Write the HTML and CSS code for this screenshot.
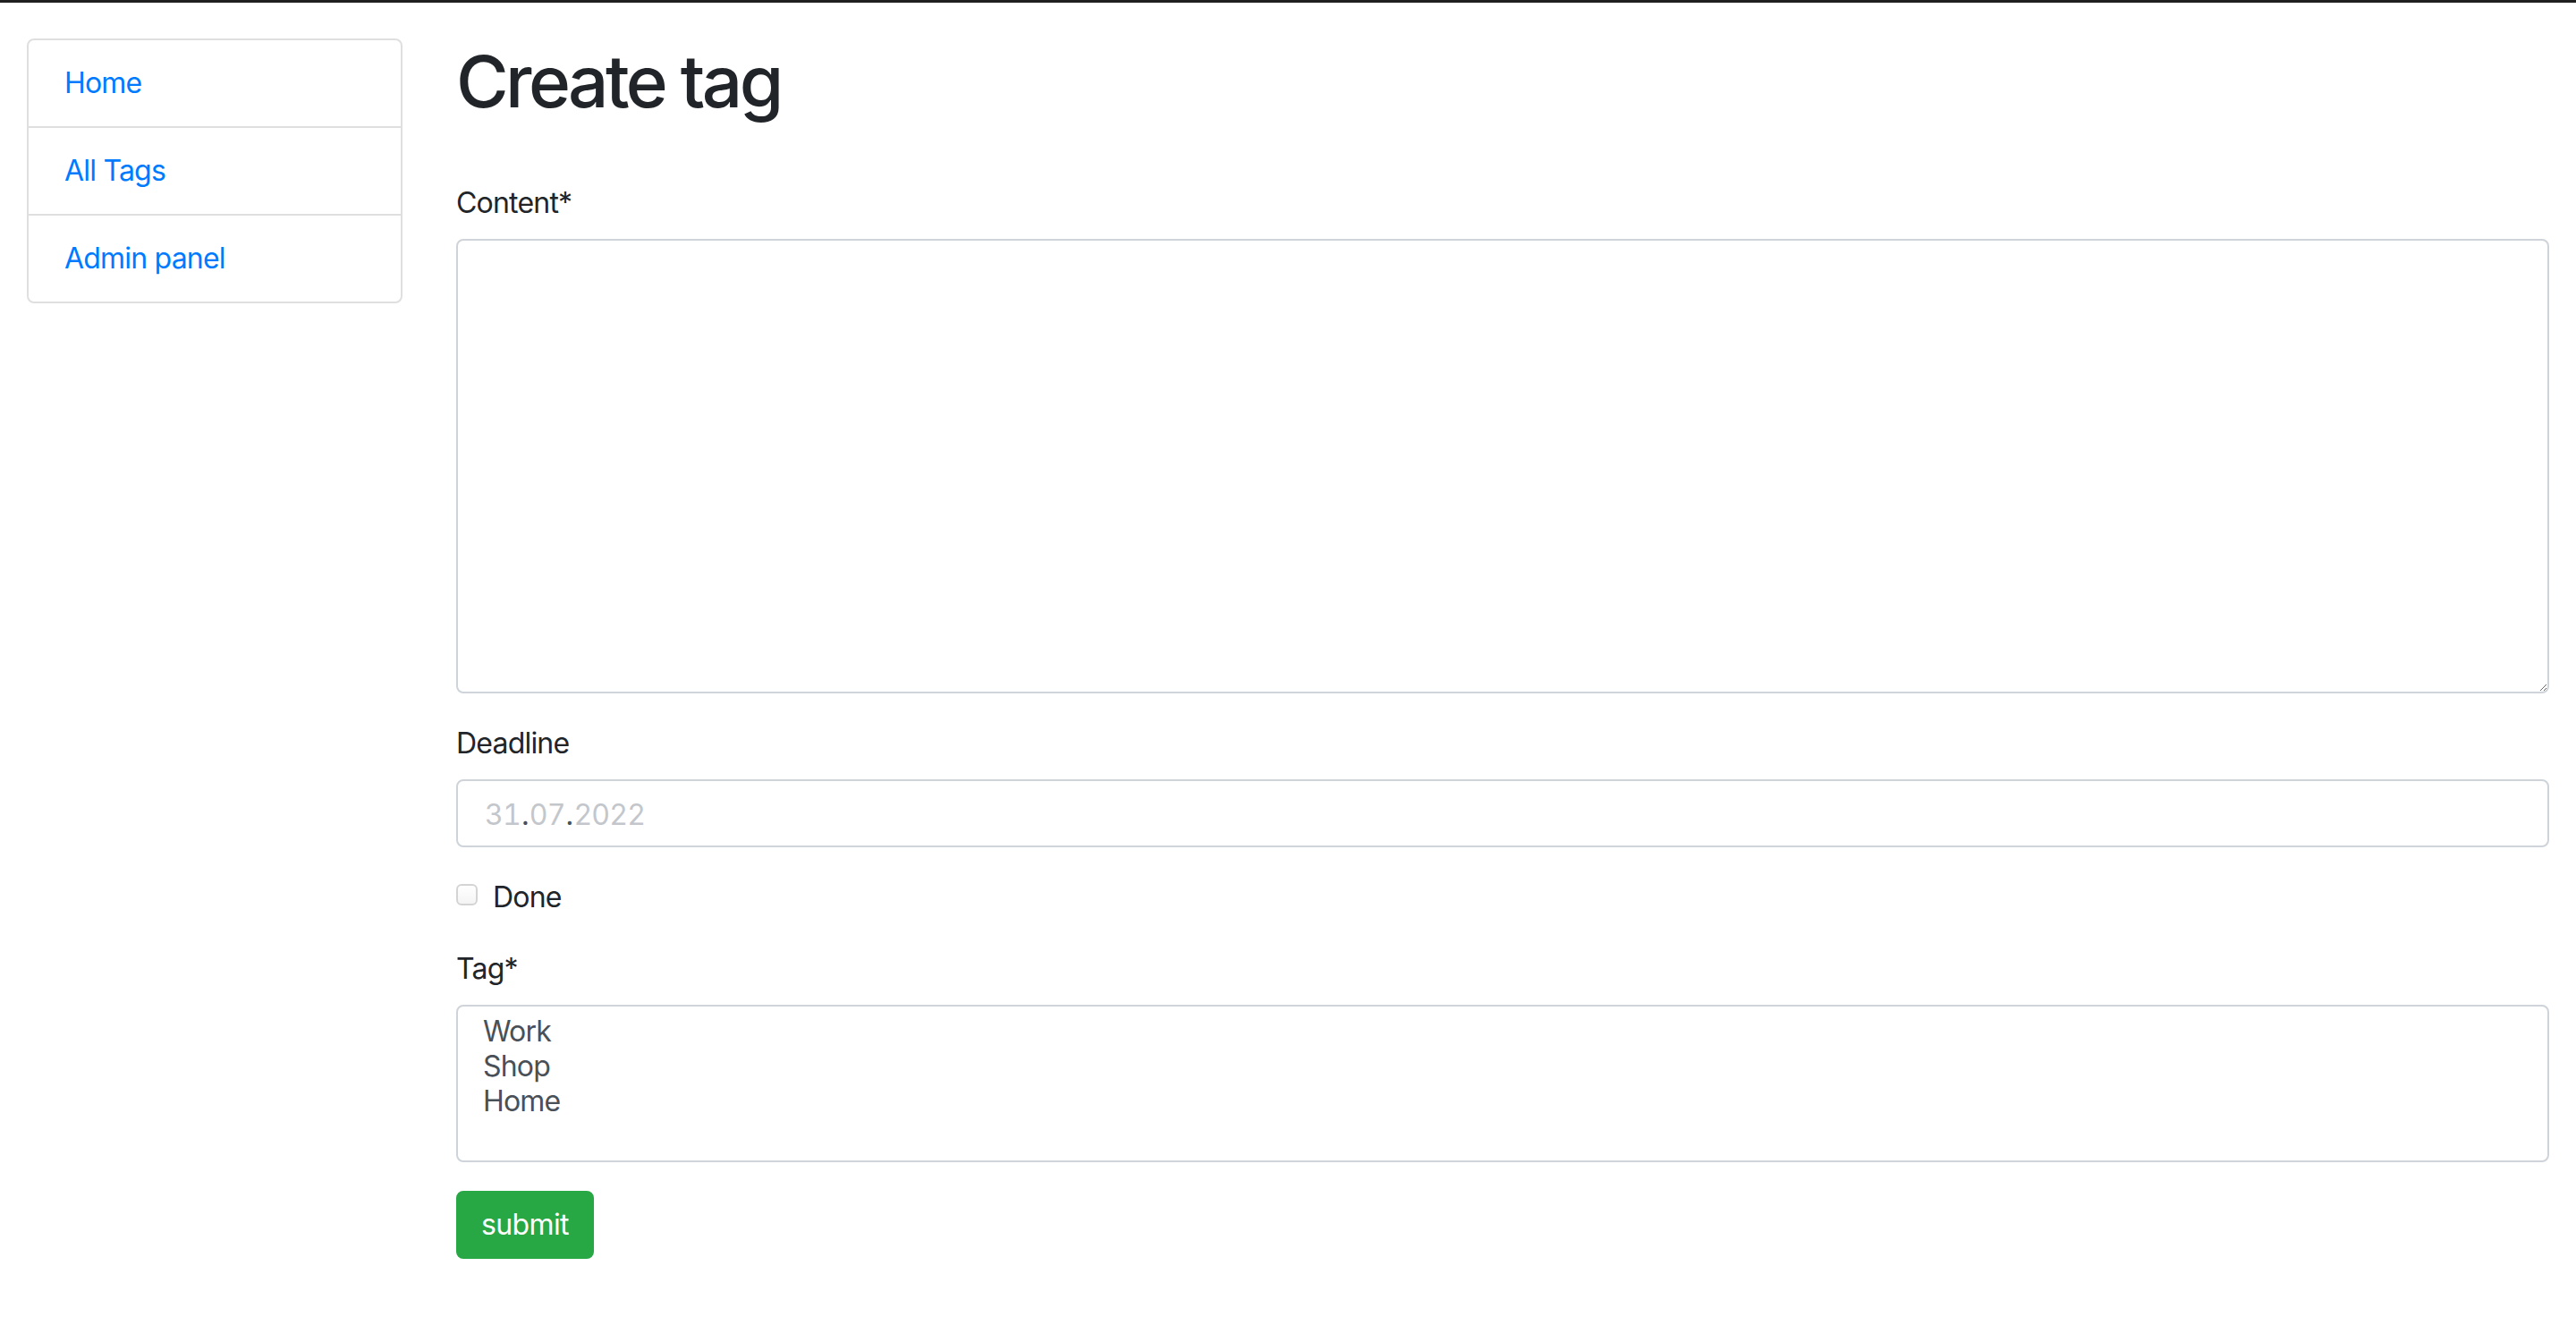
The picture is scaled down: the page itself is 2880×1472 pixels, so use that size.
FILE: index.html
```html
<!DOCTYPE html>
<html lang="en">
<head>
<meta charset="utf-8">
<title>Create tag</title>
<link rel="stylesheet" href="styles.css">
</head>
<body>
<div class="topbar"></div>
<div class="container">
  <div class="row">
    <aside class="col-side">
      <nav class="list-group">
        <a class="list-item" href="#">Home</a>
        <a class="list-item" href="#">All Tags</a>
        <a class="list-item" href="#">Admin panel</a>
      </nav>
    </aside>
    <main class="col-main">
      <h1 class="title">Create tag</h1>
      <form class="form">
        <div class="form-group">
          <label class="label">Content*</label>
          <textarea class="control textarea"></textarea>
        </div>
        <div class="form-group">
          <label class="label">Deadline</label>
          <div class="control date"><span class="dp">31</span><span class="dot">.</span><span class="dp">07</span><span class="dot">.</span><span class="dp">2022</span></div>
        </div>
        <div class="form-group form-check">
          <span class="checkbox"></span>
          <label class="check-label">Done</label>
        </div>
        <div class="form-group">
          <label class="label">Tag*</label>
          <select class="control select" multiple>
            <option>Work</option>
            <option>Shop</option>
            <option>Home</option>
          </select>
        </div>
        <button class="btn" type="button">submit</button>
      </form>
    </main>
  </div>
</div>
</body>
</html>
```
FILE: styles.css
```css
* { box-sizing: border-box; }
html, body {
  margin: 0;
  background: #fff;
}
body {
  font-family: Inter, "Noto Sans", "Liberation Sans", sans-serif;
  font-size: 32px;
  line-height: 48px;
  letter-spacing: -0.025em;
  color: #212529;
}
.topbar {
  height: 3px;
  background: #1f1f1f;
}
.container {
  padding: 40px 30px 0;
}
.row {
  display: flex;
}
.col-side {
  width: 450px;
  flex: 0 0 450px;
  padding: 0 30px 0 0;
}
.col-main {
  flex: 1;
  padding: 0 0 0 30px;
}
.list-group {
  display: flex;
  flex-direction: column;
  border: 2px solid #dfdfdf;
  border-radius: 8px;
}
.list-item {
  display: block;
  padding: 24px 40px;
  color: #007bff;
  text-decoration: none;
  line-height: 48px;
}
.list-item + .list-item {
  border-top: 2px solid #dfdfdf;
}
.title {
  margin: 0 0 64px;
  font-size: 80px;
  line-height: 96px;
  font-weight: 500;
  letter-spacing: -0.045em;
  color: #212529;
}
.form-group {
  margin-bottom: 32px;
}
.label {
  display: inline-block;
  margin-bottom: 16px;
}
.control {
  display: block;
  width: 100%;
  border: 2px solid #ced4da;
  border-radius: 8px;
  padding: 12px 24px;
  font-family: Inter, "Noto Sans", "Liberation Sans", sans-serif;
  font-size: 32px;
  line-height: 48px;
  letter-spacing: -0.025em;
  color: #495057;
  background: #fff;
}
.textarea {
  height: 508px;
  resize: vertical;
}
.date {
  height: 76px;
  padding: 14px 24px 10px 30px;
  font-variant-numeric: tabular-nums;
}
.dp { color: #c3c7cc; }
.dot {
  color: #495057;
  padding: 0 1px;
}
.form-check {
  position: relative;
  padding-left: 41px;
}
.checkbox {
  position: absolute;
  left: 0;
  top: 9px;
  width: 24px;
  height: 24px;
  border: 2px solid #d4d4d4;
  border-radius: 6px;
  background: linear-gradient(#ffffff, #f4f4f4);
}
.select {
  height: 176px;
  overflow: hidden;
  padding: 8px 24px 12px;
}
.select option {
  color: #495057;
  padding: 0 4px;
  line-height: 38px;
  min-height: 38px;
}
.btn {
  display: inline-block;
  background: #28a745;
  border: 2px solid #28a745;
  border-radius: 8px;
  color: #fff;
  font-family: Inter, "Noto Sans", "Liberation Sans", sans-serif;
  font-size: 32px;
  line-height: 48px;
  letter-spacing: -0.02em;
  padding: 12px 26px;
  height: 76px;
}
```
